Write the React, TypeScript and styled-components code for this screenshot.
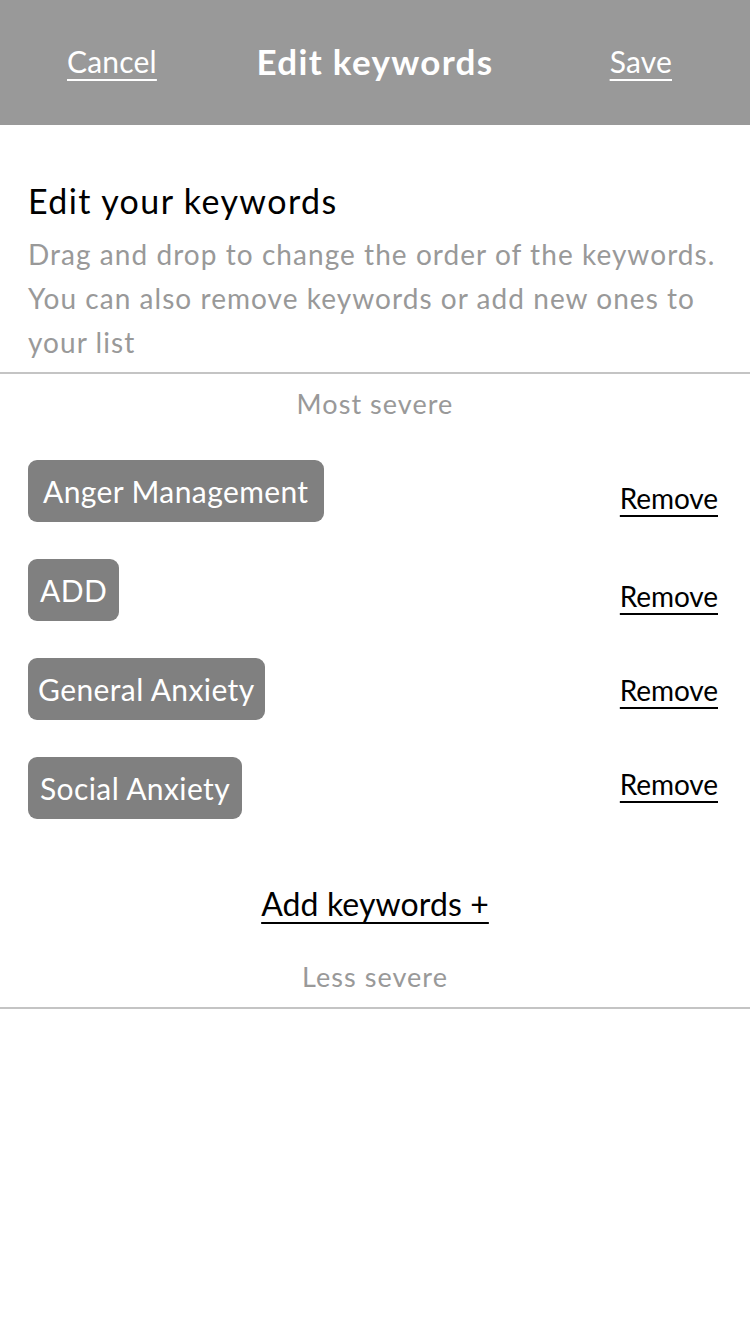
import React from 'react';
import styled, { createGlobalStyle } from 'styled-components';

const GlobalStyle = createGlobalStyle`
  html, body {
    margin: 0;
    padding: 0;
    background: #ffffff;
  }
  body {
    font-family: Lato, "Open Sans", "Liberation Sans", sans-serif;
    -webkit-font-smoothing: antialiased;
  }
`;

const Page = styled.div`
  width: 750px;
  min-height: 1334px;
  background: #ffffff;
`;

const Header = styled.header`
  display: grid;
  grid-template-columns: 1fr auto 1fr;
  align-items: center;
  height: 125px;
  background-color: #999999;
  color: #ffffff;
`;

const HeaderLink = styled.a<{ $align: 'left' | 'right' }>`
  justify-self: ${p => (p.$align === 'left' ? 'start' : 'end')};
  margin: ${p => (p.$align === 'left' ? '0 0 4px 67px' : '0 78px 4px 0')};
  font-size: 30px;
  color: #ffffff;
  text-decoration: underline;
  text-underline-offset: 6px;
  text-decoration-thickness: 2px;
  letter-spacing: 0.2px;
  cursor: pointer;
`;

const Title = styled.h1`
  margin: 0 0 4px;
  font-size: 35px;
  font-weight: 700;
  letter-spacing: 1.3px;
`;

const Intro = styled.section`
  padding: 54px 28px 8px;
`;

const IntroHeading = styled.h2`
  margin: 0 0 9px;
  font-size: 34px;
  font-weight: 400;
  color: #000000;
  line-height: 44px;
  letter-spacing: 1.4px;
`;

const IntroText = styled.p`
  margin: 0;
  font-size: 28px;
  line-height: 44px;
  color: #999999;
  letter-spacing: 1.05px;
  white-space: nowrap;
`;

const Divider = styled.hr`
  margin: 0;
  border: none;
  border-top: 2px solid #c4c4c4;
`;

const SeverityLabel = styled.div`
  text-align: center;
  font-size: 27px;
  color: #999999;
  line-height: 40px;
  letter-spacing: 1.05px;
`;

const TopLabel = styled(SeverityLabel)`
  padding-top: 10px;
`;

const KeywordList = styled.ul`
  list-style: none;
  margin: 0;
  padding: 36px 32px 0 28px;
  display: flex;
  flex-direction: column;
  gap: 37px;
`;

const KeywordRow = styled.li`
  display: flex;
  align-items: center;
  justify-content: space-between;
  height: 62px;
`;

const Chip = styled.span<{ $pad: number }>`
  display: inline-flex;
  align-items: center;
  height: 62px;
  padding: 0 ${p => p.$pad}px;
  box-sizing: border-box;
  background-color: #808080;
  border-radius: 9px;
  color: #ffffff;
  font-size: 30px;
  letter-spacing: 0.4px;
`;

const RemoveLink = styled.a<{ $offset: number }>`
  margin-top: ${p => p.$offset}px;
  font-size: 28px;
  color: #000000;
  text-decoration: underline;
  text-underline-offset: 6px;
  text-decoration-thickness: 2px;
  letter-spacing: -0.1px;
  cursor: pointer;
`;

const AddRow = styled.div`
  display: flex;
  justify-content: center;
  padding: 65px 0 34px;
`;

const AddLink = styled.a`
  font-size: 32px;
  color: #000000;
  text-decoration: underline;
  text-underline-offset: 6px;
  text-decoration-thickness: 2px;
  letter-spacing: 0.1px;
  cursor: pointer;
`;

const Footer = styled.div`
  padding-bottom: 10px;
`;

const keywords = [
  { label: 'Anger Management', pad: 15, offset: 14 },
  { label: 'ADD', pad: 12, offset: 12 },
  { label: 'General Anxiety', pad: 10, offset: 2 },
  { label: 'Social Anxiety', pad: 12, offset: -8 },
];

export default function App() {
  return (
    <Page>
      <GlobalStyle />
      <Header>
        <HeaderLink $align="left">Cancel</HeaderLink>
        <Title>Edit keywords</Title>
        <HeaderLink $align="right">Save</HeaderLink>
      </Header>
      <Intro>
        <IntroHeading>Edit your keywords</IntroHeading>
        <IntroText>
          Drag and drop to change the order of the keywords.
          <br />
          You can also remove keywords or add new ones to
          <br />
          your list
        </IntroText>
      </Intro>
      <Divider />
      <TopLabel>Most severe</TopLabel>
      <KeywordList>
        {keywords.map(k => (
          <KeywordRow key={k.label}>
            <Chip $pad={k.pad}>{k.label}</Chip>
            <RemoveLink $offset={k.offset}>Remove</RemoveLink>
          </KeywordRow>
        ))}
      </KeywordList>
      <AddRow>
        <AddLink>Add keywords +</AddLink>
      </AddRow>
      <Footer>
        <SeverityLabel>Less severe</SeverityLabel>
      </Footer>
      <Divider />
    </Page>
  );
}
